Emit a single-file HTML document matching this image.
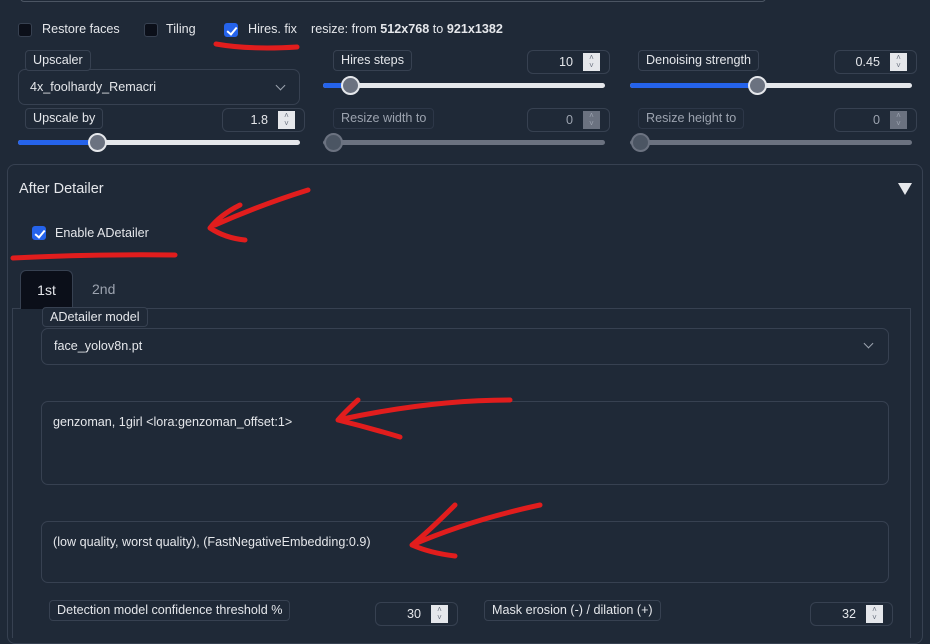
<!DOCTYPE html>
<html><head><meta charset="utf-8"><style>
*{box-sizing:border-box;margin:0;padding:0}
body{width:930px;height:626px;overflow:hidden;background:#1f2937;font-family:"Liberation Sans",sans-serif;font-size:12.6px;color:#e5e7eb;position:relative}
.a{position:absolute}
.cb{position:absolute;width:14px;height:14px;border:1px solid #374151;background:#0b0f19;border-radius:3px}
.cb.on{background:#2563eb;border-color:#2563eb}
.cb.on:after{content:"";position:absolute;left:4px;top:1px;width:4px;height:8px;border:solid #fff;border-width:0 2px 2px 0;transform:rotate(40deg)}
.lbl{position:absolute;border:1px solid #374151;border-radius:4px;background:#1f2937;padding:0 7px;height:21px;line-height:19px;font-size:12.6px;color:#e5e7eb}
.dis{color:#9ca3af}
.num{position:absolute;border:1px solid #374151;border-radius:6px;height:24px;text-align:right;line-height:22px;padding-right:36px;font-size:12.6px}
.num .sp{position:absolute;right:9px;top:2px;width:17px;height:18px;background:#e5e7eb;color:#6b7280;font-size:8px;line-height:8px;text-align:center;padding-top:1px}
.num.d .sp{background:#6b7280;color:#9ca3af}
.tr{position:absolute;height:5px;border-radius:3px;background:#e5e7eb}
.tr.d{background:#6b7280}
.fill{position:absolute;left:0;top:0;height:5px;background:#2563eb;border-radius:3px}
.th{position:absolute;width:19px;height:19px;border-radius:50%;background:#6b7280;border:2px solid #e5e7eb;top:-7px}
.tr.d .th{background:#4b5563;border-color:#6b7280}
.box{position:absolute;border:1px solid #374151;border-radius:7px;background:#1f2937}
.chev{position:absolute;width:7px;height:7px;border:solid #9ca3af;border-width:0 1px 1px 0;transform:rotate(45deg)}
</style></head><body>
<div class="a" style="left:20px;top:-10px;width:746px;height:12px;border:1px solid #4b5563;border-radius:4px"></div>

<div class="cb" style="left:18px;top:23px"></div><div class="a" style="left:42px;top:22px">Restore faces</div>
<div class="cb" style="left:144px;top:23px"></div><div class="a" style="left:166px;top:22px">Tiling</div>
<div class="cb on" style="left:224px;top:23px"></div><div class="a" style="left:248px;top:22px">Hires. fix</div>
<div class="a" style="left:311px;top:22px">resize: from <b>512x768</b> to <b>921x1382</b></div>

<div class="box" style="left:18px;top:69px;width:282px;height:36px"></div>
<div class="lbl" style="left:25px;top:50px">Upscaler</div>
<div class="a" style="left:30px;top:80px">4x_foolhardy_Remacri</div>
<div class="chev" style="left:277px;top:82px"></div>

<div class="lbl" style="left:333px;top:50px">Hires steps</div>
<div class="num" style="left:527px;top:50px;width:83px">10<div class="sp">˄<br>˅</div></div>
<div class="tr" style="left:323px;top:83px;width:282px"><div class="fill" style="width:28px"></div><div class="th" style="left:18px"></div></div>

<div class="lbl" style="left:638px;top:50px">Denoising strength</div>
<div class="num" style="left:834px;top:50px;width:83px">0.45<div class="sp">˄<br>˅</div></div>
<div class="tr" style="left:630px;top:83px;width:282px"><div class="fill" style="width:128px"></div><div class="th" style="left:118px"></div></div>

<div class="lbl" style="left:25px;top:108px">Upscale by</div>
<div class="num" style="left:222px;top:108px;width:83px">1.8<div class="sp">˄<br>˅</div></div>
<div class="tr" style="left:18px;top:140px;width:282px"><div class="fill" style="width:80px"></div><div class="th" style="left:70px"></div></div>

<div class="lbl dis" style="left:333px;top:108px;border-color:#2d3748">Resize width to</div>
<div class="num d dis" style="left:527px;top:108px;width:83px">0<div class="sp">˄<br>˅</div></div>
<div class="tr d" style="left:323px;top:140px;width:282px"><div class="th" style="left:1px"></div></div>

<div class="lbl dis" style="left:638px;top:108px;border-color:#2d3748">Resize height to</div>
<div class="num d dis" style="left:834px;top:108px;width:83px">0<div class="sp">˄<br>˅</div></div>
<div class="tr d" style="left:630px;top:140px;width:282px"><div class="th" style="left:1px"></div></div>

<div class="box" style="left:7px;top:164px;width:916px;height:480px;border-radius:8px"></div>
<div class="a" style="left:19px;top:181px;font-size:14.5px">After Detailer</div>
<div class="a" style="left:898px;top:183px;width:0;height:0;border-left:7px solid transparent;border-right:7px solid transparent;border-top:12px solid #e5e7eb"></div>

<div class="cb on" style="left:32px;top:226px"></div><div class="a" style="left:55px;top:226px">Enable ADetailer</div>

<div class="a" style="left:12px;top:308px;width:899px;height:330px;border:1px solid #374151;border-bottom:none"></div>
<div class="a" style="left:20px;top:270px;width:53px;height:39px;background:#0b0f19;border:1px solid #374151;border-bottom:none;border-radius:6px 6px 0 0;text-align:center;line-height:38px;font-size:14px">1st</div>
<div class="a" style="left:92px;top:281px;font-size:14px;color:#9ca3af">2nd</div>

<div class="box" style="left:41px;top:328px;width:848px;height:37px"></div>
<div class="lbl" style="left:42px;top:307px;height:20px;line-height:18px">ADetailer model</div>
<div class="a" style="left:54px;top:339px">face_yolov8n.pt</div>
<div class="chev" style="left:865px;top:340px"></div>

<div class="box" style="left:41px;top:401px;width:848px;height:84px"></div>
<div class="a" style="left:53px;top:415px">genzoman, 1girl &lt;lora:genzoman_offset:1&gt;</div>
<div class="box" style="left:41px;top:521px;width:848px;height:62px"></div>
<div class="a" style="left:53px;top:535px">(low quality, worst quality), (FastNegativeEmbedding:0.9)</div>

<div class="lbl" style="left:49px;top:600px">Detection model confidence threshold %</div>
<div class="num" style="left:375px;top:602px;width:83px">30<div class="sp">˄<br>˅</div></div>
<div class="lbl" style="left:484px;top:600px">Mask erosion (-) / dilation (+)</div>
<div class="num" style="left:810px;top:602px;width:83px">32<div class="sp">˄<br>˅</div></div>

<svg class="a" style="left:0;top:0" width="930" height="626" fill="none" stroke="#e11d1d" stroke-width="5" stroke-linecap="round" stroke-linejoin="round">
<path d="M216 44 Q250 50 297 47"/>
<path d="M308 190 Q260 205 215 225 M240 205 Q220 215 210 228 Q225 238 245 240"/>
<path d="M13 258 Q90 254 175 255"/>
<path d="M510 400 Q430 400 338 420 M358 400 Q345 412 338 420 Q370 428 400 437"/>
<path d="M540 505 Q470 520 412 545 M455 505 Q430 530 412 545 Q430 553 455 556"/>
</svg>
</body></html>
